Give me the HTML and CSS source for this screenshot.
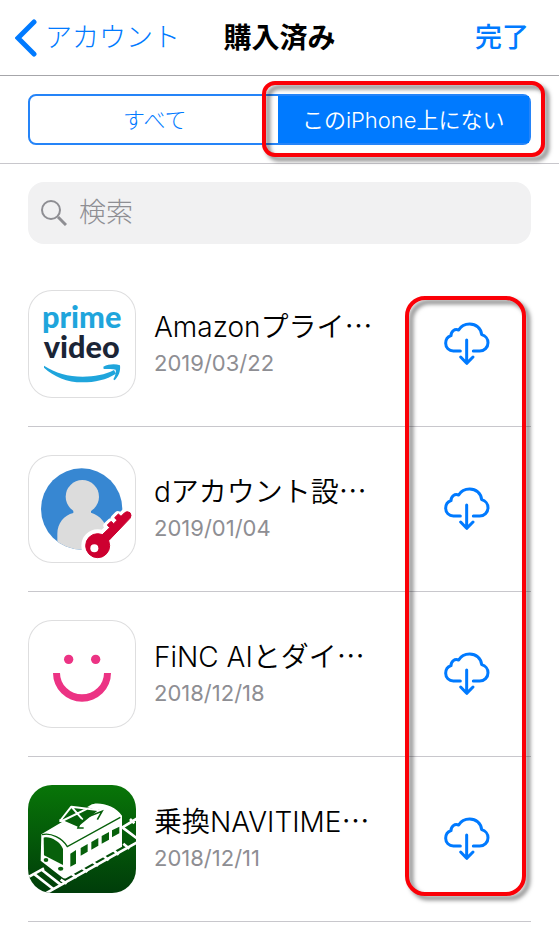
FILE: index.html
```html
<!DOCTYPE html>
<html lang="ja">
<head>
<meta charset="utf-8">
<meta name="viewport" content="width=device-width, initial-scale=1">
<title>購入済み</title>
<link rel="stylesheet" href="styles.css">
</head>
<body>
<svg class="defs" aria-hidden="true">
  <symbol id="cloud" viewBox="146 111 138 132">
    <g fill="none" stroke="currentColor" stroke-width="9" stroke-linecap="round" stroke-linejoin="round">
      <path d="M195 198H174C161 198 151 188 151 175C151 164 158 155 167 152C167 139 178 130 190 135C197 123 209 117 223 117C242 117 257 130 259 149C270 152 278 162 278 173C278 187 267 198 253 198H234"/>
      <path d="M214 165V234M196 216L214 235L233 216"/>
    </g>
  </symbol>
</svg>

<header class="navbar">
  <a class="back" href="#">
    <svg class="chevron" viewBox="0 0 22 38" aria-hidden="true"><path d="M19 3L3 19L19 35" fill="none" stroke="currentColor" stroke-width="5" stroke-linecap="round" stroke-linejoin="miter"/></svg>
    <span>アカウント</span>
  </a>
  <h1 class="title">購入済み</h1>
  <button class="done" type="button">完了</button>
</header>

<div class="filter">
  <div class="segments">
    <button class="segment" type="button" aria-pressed="false">すべて</button>
    <button class="segment selected" type="button" aria-pressed="true">このiPhone上にない</button>
    <span class="mark mark-segment"></span>
  </div>
</div>

<main class="content">
  <label class="search">
    <svg class="glass" viewBox="0 0 26 26" aria-hidden="true"><g fill="none" stroke="currentColor" stroke-width="2"><circle cx="10" cy="10" r="9"/><path d="M17 17L25 25" stroke-width="3"/></g></svg>
    <input type="search" placeholder="検索" aria-label="検索">
  </label>

  <div class="list">
    <ul class="apps">
      <li class="app">
        <svg class="app-icon framed" viewBox="24 30 324 324" aria-hidden="true">
          <text class="logo-text" x="66" y="143" fill="#1fa5dc">prime</text>
          <text class="logo-text" x="71" y="235" fill="#1b2536">video</text>
          <path d="M72 257C106 279 145 290 188 290C224 290 255 284 282 270L288 281C259 299 225 307 187 307C142 307 101 290 72 263Z" fill="#1fa5dc"/>
          <path d="M250 260C266 252 286 251 300 256C302 272 297 288 284 301L280 298C286 287 289 276 287 269C279 267 265 267 251 267Z" fill="#1fa5dc"/>
        </svg>
        <div class="info"><h2 class="name">Amazonプライ<span class="more">…</span></h2><p class="date">2019/03/22</p></div>
        <button class="download" type="button" aria-label="ダウンロード"><svg class="cloud"><use href="#cloud"/></svg></button>
      </li>
      <li class="app">
        <svg class="app-icon framed" viewBox="24 21 324 324" aria-hidden="true">
          <clipPath id="disc"><circle cx="185" cy="183" r="122"/></clipPath>
          <circle cx="185" cy="183" r="122" fill="#3787d2"/>
          <g clip-path="url(#disc)" fill="#dcdcdc">
            <circle cx="187" cy="146" r="50"/>
            <path d="M160 180H213V194C240 202 262 225 262 260V310H112V258C112 225 132 202 160 195Z"/>
          </g>
          <g stroke="#fff" stroke-width="22" stroke-linejoin="round" fill="#fff">
            <circle cx="233" cy="293" r="38"/>
            <path d="M249 257L266 240L261 233L272 222L279 227L289 217L283 211L294 200L303 205L314 194Q321 188 330 194Q336 202 330 211L267 275Z"/>
          </g>
          <g fill="#cd0030" stroke="#cd0030" stroke-width="3" stroke-linejoin="round">
            <circle cx="233" cy="293" r="36"/>
            <path d="M247 260L269 239L262 231L273 220L281 227L291 217L284 209L295 198L303 205L314 194Q321 188 330 194Q336 202 330 211L266 278Z"/>
          </g>
          <circle cx="223" cy="301" r="12" fill="#fff"/>
        </svg>
        <div class="info"><h2 class="name">dアカウント設<span class="more">…</span></h2><p class="date">2019/01/04</p></div>
        <button class="download" type="button" aria-label="ダウンロード"><svg class="cloud"><use href="#cloud"/></svg></button>
      </li>
      <li class="app">
        <svg class="app-icon framed" viewBox="24 24 324 324" aria-hidden="true">
          <g fill="#ec3384"><circle cx="146" cy="142" r="14"/><circle cx="227" cy="142" r="14"/>
          <path d="M99 183H120A66 64 0 0 0 252 183H273A87 86 0 0 1 99 183Z"/></g>
        </svg>
        <div class="info"><h2 class="name">FiNC AIとダイ<span class="more">…</span></h2><p class="date">2018/12/18</p></div>
        <button class="download" type="button" aria-label="ダウンロード"><svg class="cloud"><use href="#cloud"/></svg></button>
      </li>
      <li class="app">
        <svg class="app-icon" viewBox="24 22 324 324" aria-hidden="true">
          <linearGradient id="green" x1="0" y1="0" x2="0" y2="1"><stop offset="0" stop-color="#087508"/><stop offset="1" stop-color="#003d0a"/></linearGradient>
          <rect x="24" y="22" width="324" height="324" fill="url(#green)"/>
          <g fill="none" stroke="#fff" stroke-width="8">
            <path d="M22 300L72 272M72 350L352 194M306 150L352 122" />
            <path d="M44 290L100 334M66 277L122 321M122 306L140 318M154 288L170 300M186 270L202 283M218 252L234 265M250 234L266 248M280 217L296 231M310 198L328 213M308 150L352 183M330 124L343 137"/>
          </g>
          <path d="M64 170L212 82C230 70 286 82 306 114V207L138 302Q132 304 126 299L62 249Z" fill="#fff"/>
          <g fill="#07600b">
            <path d="M71 180C86 174 119 188 129 214V262L72 233Z"/>
            <ellipse cx="78" cy="247" rx="7" ry="6"/><ellipse cx="122" cy="273" rx="8" ry="6"/>
            <path d="M151 228L168 217V258L151 267Z"/>
            <path d="M182 211L203 199V222L182 234ZM214 193L235 181V204L214 216ZM245 175L267 163V186L245 198ZM276 158L298 147V167L276 179Z"/>
          </g>
          <path d="M66 171C92 164 128 181 142 207L301 119" fill="none" stroke="#07600b" stroke-width="4"/>
          <path d="M127 123L181 82L219 94L239 95L176 150L130 131Z" fill="#07600b"/>
          <g fill="none" stroke="#fff" stroke-width="6" stroke-linejoin="round">
            <path d="M120 130L154 87L239 98L174 151L126 130L202 93M154 87L188 126M121 125V133"/>
          </g>
          <path d="M191 151L174 151L184 125M192 122L246 101L232 126" fill="none" stroke="#07600b" stroke-width="5"/>
        </svg>
        <div class="info"><h2 class="name">乗換NAVITIME<span class="more">…</span></h2><p class="date">2018/12/11</p></div>
        <button class="download" type="button" aria-label="ダウンロード"><svg class="cloud"><use href="#cloud"/></svg></button>
      </li>
    </ul>
    <span class="mark mark-list"></span>
  </div>
</main>
</body>
</html>
```
FILE: styles.css
```css
* {
  box-sizing: border-box;
}

body {
  margin: 0;
  background: #fff;
  color: #000;
  font-family: Inter, "Noto Sans CJK JP", sans-serif;
}

button {
  padding: 0;
  border: 0;
  background: none;
  color: inherit;
  font: inherit;
}

.defs {
  position: absolute;
  width: 0;
  height: 0;
}

.navbar {
  display: grid;
  grid-template-columns: 1fr auto 1fr;
  align-items: center;
  height: 76px;
  padding: 0 30px;
  border-bottom: 1px solid #a6a6aa;
  font-size: 27px;
  line-height: 40px;
}

.back {
  display: flex;
  align-items: center;
  gap: 8px;
  margin-left: -15px;
  color: #007aff;
  font-weight: 300;
  text-decoration: none;
}

.chevron {
  width: 22px;
  height: 38px;
}

.title {
  margin: 0;
  font-size: 28px;
  font-weight: 600;
}

.done {
  justify-self: end;
  color: #007aff;
  font-weight: 500;
}

.filter {
  padding: 18px 28px;
  border-bottom: 1px solid #c8c7cc;
}

.segments {
  position: relative;
  display: grid;
  grid-template-columns: 1fr 1fr;
  height: 51px;
  border: 2px solid #2584f8;
  border-radius: 8px;
}

.segment {
  padding-bottom: 4px;
  color: #007aff;
  font-size: 22px;
  font-weight: 300;
}

.selected {
  margin-left: -2px;
  background: #007aff;
  color: #fff;
  font-weight: 350;
}

.mark {
  position: absolute;
  border: 4px solid #fb0007;
  filter: drop-shadow(4px 4px 2px rgba(0, 0, 0, 0.5));
  pointer-events: none;
}

.mark-segment {
  top: -15px;
  right: -16px;
  bottom: -14px;
  left: calc(50% - 18px);
  border-radius: 13px;
}

.content {
  padding: 18px 28px;
}

.search {
  display: flex;
  align-items: center;
  gap: 12px;
  height: 62px;
  padding: 0 13px;
  border-radius: 16px;
  background: #f1f1f2;
  color: #8e8e93;
}

.glass {
  width: 26px;
  height: 26px;
}

.search input {
  flex: 1;
  min-width: 0;
  padding: 0;
  border: 0;
  outline: 0;
  background: none;
  color: #000;
  font: 300 27px/40px Inter, "Noto Sans CJK JP", sans-serif;
}

.search input::placeholder {
  color: #8e8e93;
}

.list {
  position: relative;
  margin-top: 18px;
}

.apps {
  margin: 0;
  padding: 0;
  list-style: none;
}

.app {
  display: flex;
  align-items: center;
  gap: 18px;
  padding: 28px 0;
  border-bottom: 1px solid #c8c7cc;
}

.app-icon {
  flex: none;
  width: 108px;
  height: 108px;
  border-radius: 24px;
}

.framed {
  box-shadow: inset 0 0 0 1px #dededf;
}

.logo-text {
  font-family: Lato, sans-serif;
  font-size: 92px;
  font-weight: 900;
}

.info {
  flex: 1;
  min-width: 0;
  white-space: nowrap;
}

.name {
  margin: 0;
  font-size: 28px;
  font-weight: 350;
  line-height: 36px;
}

.more {
  font-family: "Noto Sans CJK JP", sans-serif;
}

.date {
  margin: 0;
  color: #8e8e93;
  font-size: 22px;
  line-height: 36px;
}

.download {
  margin-right: 41px;
  color: #007aff;
}

.cloud {
  display: block;
  width: 46px;
  height: 44px;
}

.mark-list {
  top: 34px;
  right: 5px;
  bottom: 26px;
  width: 121px;
  border-radius: 20px;
}
```
